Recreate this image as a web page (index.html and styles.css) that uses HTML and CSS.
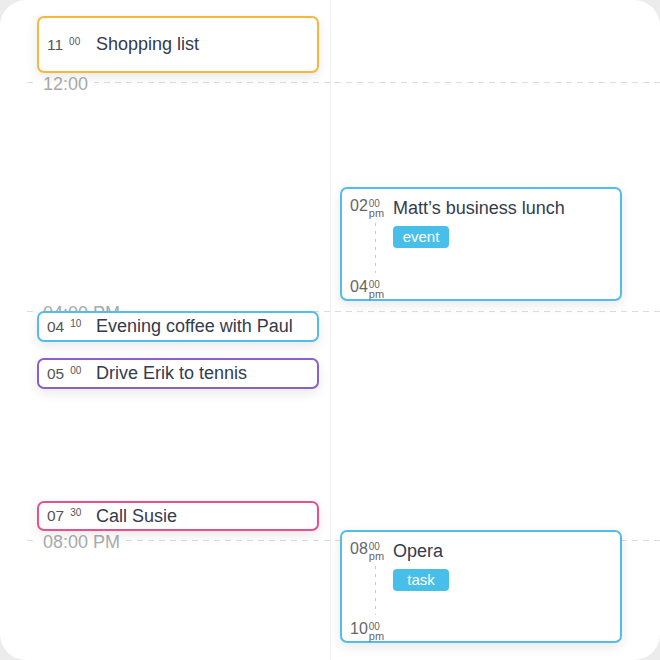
FILE: index.html
```html
<!DOCTYPE html>
<html lang="en">
    <head>
        <meta charset="utf-8" />
        <title>Day view</title>
        <link rel="stylesheet" href="styles.css">
    </head>
    <body>
        <div class="calendar">
            <div class="timeline">
                <div class="hour-line" style="top:82px"><span class="hour-label">12:00</span></div>
                <div class="hour-line" style="top:311px"><span class="hour-label">04:00 PM</span></div>
                <div class="hour-line" style="top:540px"><span class="hour-label">08:00 PM</span></div>

                <div class="col">
                    <div class="event event-orange" style="top:16px;height:57px">
                        <span class="time">11<sup>00</sup></span>
                        <span class="title">Shopping list</span>
                    </div>
                    <div class="event event-blue" style="top:311px;height:31px">
                        <span class="time">04<sup>10</sup></span>
                        <span class="title">Evening coffee with Paul</span>
                    </div>
                    <div class="event event-purple" style="top:358px;height:31px">
                        <span class="time">05<sup>00</sup></span>
                        <span class="title">Drive Erik to tennis</span>
                    </div>
                    <div class="event event-pink" style="top:501px;height:30px">
                        <span class="time">07<sup>30</sup></span>
                        <span class="title">Call Susie</span>
                    </div>
                </div>

                <div class="col col-right">
                    <div class="event event-long event-blue" style="top:187px;height:114px">
                        <div class="range">
                            <div class="stamp"><span class="h">02</span><span class="m"><span>00</span><span class="pm">pm</span></span></div>
                            <div class="dots"></div>
                            <div class="stamp"><span class="h">04</span><span class="m"><span>00</span><span class="pm">pm</span></span></div>
                        </div>
                        <div class="body">
                            <div class="title">Matt’s business lunch</div>
                            <span class="tag">event</span>
                        </div>
                    </div>
                    <div class="event event-long event-blue" style="top:530px;height:113px">
                        <div class="range">
                            <div class="stamp"><span class="h">08</span><span class="m"><span>00</span><span class="pm">pm</span></span></div>
                            <div class="dots"></div>
                            <div class="stamp"><span class="h">10</span><span class="m"><span>00</span><span class="pm">pm</span></span></div>
                        </div>
                        <div class="body">
                            <div class="title">Opera</div>
                            <span class="tag">task</span>
                        </div>
                    </div>
                </div>
            </div>
        </div>
    </body>
</html>
```

FILE: styles.css
```css
* {
    margin: 0;
    padding: 0;
    box-sizing: border-box;
}
body {
    background-color: #ececec;
    font-family: "Liberation Sans", Arial, sans-serif;
    color: #343b4c;
}
.calendar {
    width: 660px;
    height: 660px;
    background-color: #fff;
    border-radius: 26px;
    overflow: hidden;
}
.timeline {
    position: relative;
    margin-left: 27px;
    height: 660px;
    display: grid;
    grid-template-columns: 303px 303px;
}
.col {
    position: relative;
}
.col-right {
    border-left: 1px solid #f0f0f0;
}

/* hour rules */
.hour-line {
    position: absolute;
    left: 0;
    width: 640px;
    height: 1px;
    background-image: linear-gradient(to right, #dcdcdc 6px, transparent 6px);
    background-size: 11px 1px;
}
.hour-label {
    position: absolute;
    left: 10px;
    top: -8px;
    padding: 0 6px;
    background-color: #fff;
    font-size: 18px;
    line-height: 20px;
    color: #ababab;
}

/* events */
.event {
    position: absolute;
    left: 10px;
    width: 282px;
    z-index: 1;
    display: flex;
    align-items: center;
    padding-left: 8px;
    background-color: #fff;
    border: 2px solid #52bde9;
    border-radius: 7px;
    box-shadow: 0 4px 12px rgba(0, 0, 0, 0.09);
}
.col-right .event {
    left: 9px;
}
.event-orange { border-color: #f7b73a; }
.event-blue { border-color: #52bde9; }
.event-purple { border-color: #8c60cb; }
.event-pink { border-color: #e8528b; }

.event .time {
    width: 49px;
    flex-shrink: 0;
    font-size: 15.5px;
    color: #555;
}
.event .time sup {
    font-size: 10px;
    margin-left: 6px;
    vertical-align: 5px;
}
.event .title {
    font-size: 18px;
    white-space: nowrap;
}

/* multi-hour events */
.event-long {
    align-items: stretch;
    padding-top: 8px;
}
.range {
    width: 43px;
    flex-shrink: 0;
    display: flex;
    flex-direction: column;
    color: #666;
}
.stamp {
    display: flex;
    align-items: flex-start;
}
.stamp .h {
    font-size: 16px;
    line-height: 18px;
}
.stamp .m {
    display: flex;
    flex-direction: column;
    font-size: 10px;
    line-height: 9px;
    margin-left: 1px;
    padding-top: 2px;
}
.stamp .pm {
    font-size: 11px;
    line-height: 9px;
    margin-top: 1px;
}
.dots {
    flex: 1;
    width: 1px;
    margin: 5px 0 5px 25px;
    background-image: linear-gradient(to bottom, #c8c8c8 3px, transparent 3px);
    background-size: 1px 8px;
}
.body {
    padding-top: 1px;
}
.tag {
    display: block;
    width: 56px;
    margin-top: 7px;
    height: 22px;
    line-height: 22px;
    text-align: center;
    border-radius: 4px;
    background-color: #47bfe9;
    color: #fff;
    font-size: 15px;
}
```
